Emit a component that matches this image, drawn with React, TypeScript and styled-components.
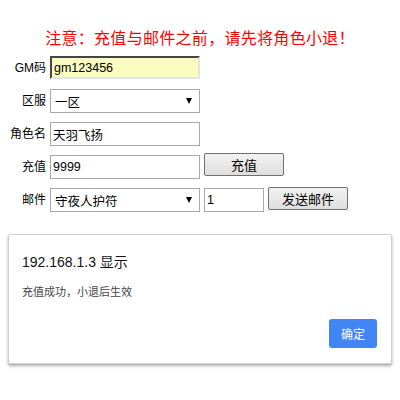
import React from "react"
import styled, { createGlobalStyle } from "styled-components"

const GlobalStyle = createGlobalStyle`
    html, body {
        margin: 0;
        padding: 0;
        background: #fff;
    }
    body {
        font-family: "Liberation Sans", "Noto Sans CJK SC", sans-serif;
        color: #000;
    }
`

const Page = styled.div`
    width: 400px;
    height: 400px;
    overflow: hidden;
    display: flex;
    flex-direction: column;
`

const Notice = styled.div`
    margin-top: 28px;
    height: 18px;
    line-height: 18px;
    text-align: center;
    color: #f00;
    font-size: 16px;
    letter-spacing: 0.3px;
    font-family: "Noto Sans CJK SC", sans-serif;
`

const Form = styled.div`
    margin-top: 10px;
    display: flex;
    flex-direction: column;
    gap: 9px;
`

const Row = styled.div`
    display: flex;
    align-items: flex-start;
    height: 24px;
    gap: 4px;
`

const Label = styled.label`
    width: 46px;
    text-align: right;
    font-size: 12px;
    line-height: 24px;
    font-family: "Liberation Sans", "Noto Sans CJK SC", sans-serif;
`

const TextInput = styled.input<{ $w?: number; $highlight?: boolean }>`
    box-sizing: border-box;
    width: ${(p) => p.$w ?? 150}px;
    height: ${(p) => (p.$highlight ? 23 : 24)}px;
    margin: 0;
    padding: 0 2px;
    font-size: 12.5px;
    font-family: "Liberation Sans", "Noto Sans CJK SC", sans-serif;
    color: #000;
    background: ${(p) => (p.$highlight ? "#fafcc0" : "#fff")};
    border: ${(p) => (p.$highlight ? "2px inset #e4e4e4" : "1px solid #a9a9a9")};
    border-top-color: ${(p) => (p.$highlight ? "#999" : "#a9a9a9")};
    border-left-color: ${(p) => (p.$highlight ? "#999" : "#a9a9a9")};
    outline: none;
`

const SelectBox = styled.div`
    position: relative;
    width: 150px;
    height: 24px;

    &::after {
        content: "";
        position: absolute;
        right: 8px;
        top: 9px;
        border-left: 3.5px solid transparent;
        border-right: 3.5px solid transparent;
        border-top: 6px solid #000;
        pointer-events: none;
    }
`

const Select = styled.select`
    appearance: none;
    box-sizing: border-box;
    width: 100%;
    height: 24px;
    margin: 0;
    padding: 0 4px;
    font-size: 12.5px;
    font-family: "Noto Sans CJK SC", sans-serif;
    color: #000;
    background: #fff;
    border: 1px solid #a9a9a9;
    border-radius: 0;
    outline: none;
`

const Button = styled.button<{ $lift?: number }>`
    box-sizing: border-box;
    width: 80px;
    height: 23px;
    margin: 0;
    margin-top: ${(p) => -(p.$lift ?? 0)}px;
    padding: 0;
    font-size: 13px;
    font-family: "Noto Sans CJK SC", sans-serif;
    color: #000;
    background: linear-gradient(#f2f2f2, #dedede);
    border: 1px solid #707070;
    border-radius: 2px;
`

const Dialog = styled.div`
    margin: 22px 8px 0;
    box-sizing: border-box;
    height: 130px;
    padding: 18px 14px 15px 13px;
    border: 1px solid #cfcfcf;
    border-radius: 2px;
    background: #fff;
    box-shadow: 0 2px 3px rgba(0, 0, 0, 0.32);
    display: flex;
    flex-direction: column;
`

const DialogTitle = styled.div`
    font-size: 14px;
    line-height: 18px;
    color: #111;
    font-family: "Liberation Sans", "Noto Sans CJK SC", sans-serif;
`

const DialogMessage = styled.div`
    margin-top: 12px;
    font-size: 11px;
    line-height: 16px;
    color: #444;
    font-family: "Noto Sans CJK SC", sans-serif;
`

const DialogFooter = styled.div`
    margin-top: auto;
    display: flex;
    justify-content: flex-end;
`

const OkButton = styled.button`
    width: 48px;
    height: 29px;
    padding: 0;
    border: none;
    border-radius: 3px;
    background: #4285f4;
    color: #fff;
    font-size: 12px;
    font-family: "Noto Sans CJK SC", sans-serif;
`

const App = () => {
    return (
        <Page>
            <GlobalStyle />
            <Notice>注意：充值与邮件之前，请先将角色小退！</Notice>
            <Form>
                <Row>
                    <Label>GM码</Label>
                    <TextInput $highlight defaultValue="gm123456" />
                </Row>
                <Row>
                    <Label>区服</Label>
                    <SelectBox>
                        <Select defaultValue="1">
                            <option value="1">一区</option>
                        </Select>
                    </SelectBox>
                </Row>
                <Row>
                    <Label>角色名</Label>
                    <TextInput defaultValue="天羽飞扬" />
                </Row>
                <Row>
                    <Label>充值</Label>
                    <TextInput defaultValue="9999" />
                    <Button $lift={2}>充值</Button>
                </Row>
                <Row>
                    <Label>邮件</Label>
                    <SelectBox>
                        <Select defaultValue="a">
                            <option value="a">守夜人护符</option>
                        </Select>
                    </SelectBox>
                    <TextInput $w={60} defaultValue="1" />
                    <Button $lift={1}>发送邮件</Button>
                </Row>
            </Form>
            <Dialog>
                <DialogTitle>192.168.1.3 显示</DialogTitle>
                <DialogMessage>充值成功，小退后生效</DialogMessage>
                <DialogFooter>
                    <OkButton>确定</OkButton>
                </DialogFooter>
            </Dialog>
        </Page>
    )
}

export default App
